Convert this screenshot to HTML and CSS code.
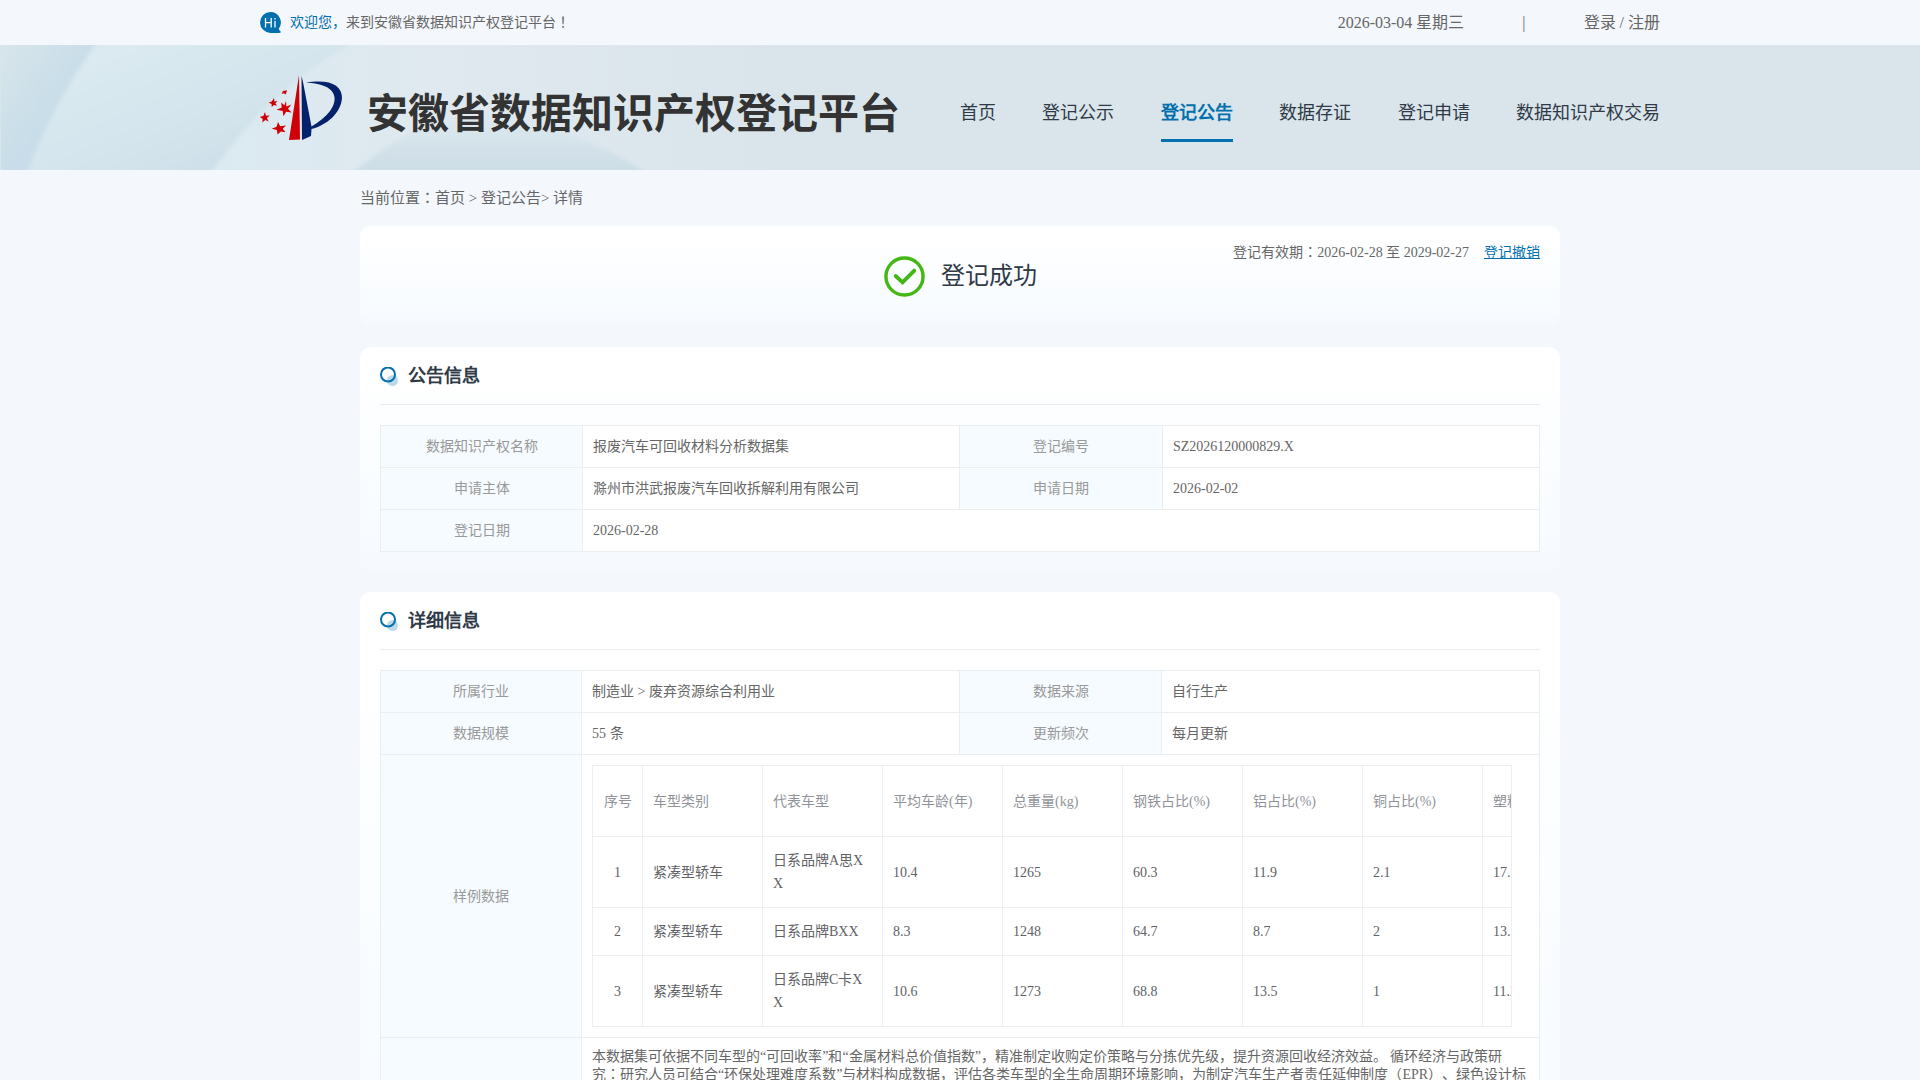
FILE: index.html
```html
<!DOCTYPE html>
<html lang="zh-CN">
<head>
<meta charset="utf-8">
<title>安徽省数据知识产权登记平台</title>
<link rel="stylesheet" href="styles.css">
</head>
<body>
<div class="topbar">
  <div class="wide topbar-inner">
    <div class="welcome">
      <svg class="hi" viewBox="0 0 21 21" aria-hidden="true"><path d="M10.500 0a10.300 10.300 0 0 1 8.300 16.400q.4 2 2.200 3.600-.5.900-2.500.900H10.500A10.400 10.400 0 0 1 10.500 0z" fill="#0270ad"/><path d="M5.500 6v9.500M11.200 6v9.500M5.500 10.700h5.700M15 9v6.500M15 6v1.400" stroke="#fff" stroke-width="1.300" fill="none"/></svg>
      <span><span class="accent">欢迎您，</span>来到安徽省数据知识产权登记平台<span class="punct" lang="zh-TW">！</span></span>
    </div>
    <div class="account">
      <span>2026-03-04 星期三</span>
      <span>|</span>
      <a href="#">登录 / 注册</a>
    </div>
  </div>
</div>
<header class="banner">
  <svg class="waves" viewBox="0 0 780 125" preserveAspectRatio="xMinYMin slice" aria-hidden="true">
    <defs>
      <linearGradient id="g1" x1="0" y1="0" x2="1" y2="1"><stop offset="0" stop-color="#dae6eb"/><stop offset=".5" stop-color="#c9dee9"/><stop offset="1" stop-color="#c3dae7"/></linearGradient>
      <linearGradient id="g2" x1="0" y1="0" x2="1" y2="1"><stop offset=".1" stop-color="#dcebf2"/><stop offset=".5" stop-color="#d5e5ed"/><stop offset="1" stop-color="#c6dae6"/></linearGradient>
      <linearGradient id="g3" x1="0" y1="0" x2="1" y2="0"><stop offset=".25" stop-color="#dbeaf1"/><stop offset=".55" stop-color="#dfe9ef"/><stop offset="1" stop-color="#dae5eb"/></linearGradient>
      <linearGradient id="g4" x1="0" y1="0" x2="0" y2="1"><stop offset="0" stop-color="#dce8ee"/><stop offset=".5" stop-color="#d2e1e9"/><stop offset="1" stop-color="#cbdde6"/></linearGradient>
      <filter id="soft" x="-5%" y="-5%" width="110%" height="110%"><feGaussianBlur stdDeviation="2"/></filter>
    </defs>
    <rect width="780" height="125" fill="url(#g3)"/>
    <g filter="url(#soft)">
      <path d="M-9-9H101Q51 58 24 134H-9z" fill="url(#g1)"/>
      <path d="M101-9H362Q262 48 206 134H24Q51 58 101-9z" fill="url(#g2)"/>
      <path d="M345 134Q395 88 440 78Q550 62 655 134z" fill="url(#g4)"/>
    </g>
  </svg>
  <div class="wide banner-inner">
    <a class="brand" href="#">
      <svg class="mark" viewBox="0 0 84 66" aria-hidden="true">
        <path d="M39 0l1 64.500-11 .5z" fill="#d00007"/>
        <path d="M41.500 1L43 7 51.500 51.500Q64 44 70 36C79 24 77 9 46 7.500 70 4 82 10 82 23 81 38 67 50 51.500 54L51 61 42 65z" fill="#04216b"/>
        <g fill="#d00007">
          <path d="M26 26l.4 5.400 5-2-3.400 4.400 3.600 3.700-5.400-.8-2.800 4.500-.7-5.200-6.200-1.200 5.300-2.400-.7-4.900 3.300 2.700z"/>
          <path d="M14 23l.4 3.500 3.200-.4-2.200 2.200 1.600 2.500-3-.8-2.300 2-.1-3.100-3-1.500 3.200-1z"/>
          <path d="M5 37l.9 3.700 4-.2-3 2.500 1.700 3.500-3.300-1.400-3 2.500.4-3.700-3-2.200 3.600-.6z"/>
          <path d="M18 47l2.200 4.300 5.800-.9-3.300 3.300 2.800 3.500-4.600-.8-3.300 3-.7-4.300-5.200-1.300 4.900-2z"/>
          <path d="M23 16l4-.7-1.200 4.200-1.800-1.200-2.300.7z"/>
        </g>
      </svg>
      <span class="brand-name">安徽省数据知识产权登记平台</span>
    </a>
    <nav class="nav">
      <a href="#">首页</a>
      <a href="#">登记公示</a>
      <a href="#" class="active">登记公告</a>
      <a href="#">数据存证</a>
      <a href="#">登记申请</a>
      <a href="#">数据知识产权交易</a>
    </nav>
  </div>
</header>
<main class="content">
  <div class="crumbs">当前位置<span class="punct" lang="zh-TW">：</span><a href="#">首页</a> &gt; <a href="#">登记公告</a>&gt; 详情</div>
  <section class="card result">
    <div class="validity"><span>登记有效期<span class="punct" lang="zh-TW">：</span>2026-02-28 至 2029-02-27</span><a href="#">登记撤销</a></div>
    <svg class="check" viewBox="0 0 42 42" fill="none" stroke="#44b616" aria-hidden="true"><circle cx="21" cy="21" r="19" stroke-width="3.500"/><path d="M12 20.500l7 6.500 12-12" stroke-width="4" stroke-linecap="round"/></svg>
    <span class="status">登记成功</span>
  </section>
  <section class="card">
    <h2 class="heading"><svg class="dot" viewBox="0 0 18 20" aria-hidden="true"><circle cx="12.500" cy="13.500" r="5.500" fill="#bcd9ea"/><circle cx="8" cy="7.500" r="7" fill="none" stroke="#0270ad" stroke-width="2"/></svg>公告信息</h2>
    <table class="info">
      <colgroup><col class="label"><col class="value"><col class="label-mid"><col></colgroup>
      <tr><th>数据知识产权名称</th><td>报废汽车可回收材料分析数据集</td><th>登记编号</th><td>SZ2026120000829.X</td></tr>
      <tr><th>申请主体</th><td>滁州市洪武报废汽车回收拆解利用有限公司</td><th>申请日期</th><td>2026-02-02</td></tr>
      <tr><th>登记日期</th><td colspan="3">2026-02-28</td></tr>
    </table>
  </section>
  <section class="card">
    <h2 class="heading"><svg class="dot" viewBox="0 0 18 20" aria-hidden="true"><circle cx="12.500" cy="13.500" r="5.500" fill="#bcd9ea"/><circle cx="8" cy="7.500" r="7" fill="none" stroke="#0270ad" stroke-width="2"/></svg>详细信息</h2>
    <table class="info detail">
      <colgroup><col class="label"><col class="value"><col class="label-mid"><col></colgroup>
      <tr><th>所属行业</th><td>制造业 &gt; 废弃资源综合利用业</td><th>数据来源</th><td>自行生产</td></tr>
      <tr><th>数据规模</th><td>55 条</td><th>更新频次</th><td>每月更新</td></tr>
      <tr><th>样例数据</th><td colspan="3">
        <div class="sample-wrap">
          <table class="sample">
            <colgroup><col class="index"><col><col><col><col><col><col><col><col></colgroup>
            <thead><tr><th>序号</th><th>车型类别</th><th>代表车型</th><th>平均车龄(年)</th><th>总重量(kg)</th><th>钢铁占比(%)</th><th>铝占比(%)</th><th>铜占比(%)</th><th>塑料占比(%)</th></tr></thead>
            <tbody>
              <tr><td>1</td><td>紧凑型轿车</td><td>日系品牌A思XX</td><td>10.4</td><td>1265</td><td>60.3</td><td>11.9</td><td>2.1</td><td>17.2</td></tr>
              <tr><td>2</td><td>紧凑型轿车</td><td>日系品牌BXX</td><td>8.3</td><td>1248</td><td>64.7</td><td>8.7</td><td>2</td><td>13.5</td></tr>
              <tr><td>3</td><td>紧凑型轿车</td><td>日系品牌C卡XX</td><td>10.6</td><td>1273</td><td>68.8</td><td>13.5</td><td>1</td><td>11.2</td></tr>
            </tbody>
          </table>
        </div>
      </td></tr>
      <tr class="scenario"><th>应用场景</th><td colspan="3">本数据集可依据不同车型的“可回收率”和“金属材料总价值指数”，精准制定收购定价策略与分拣优先级，提升资源回收经济效益。 循环经济与政策研究<span class="punct" lang="zh-TW">：</span>研究人员可结合“环保处理难度系数”与材料构成数据，评估各类车型的全生命周期环境影响，为制定汽车生产者责任延伸制度（EPR）、绿色设计标准提供依据。</td></tr>
    </table>
  </section>
</main>
</body>
</html>
```
FILE: styles.css
```css
* { box-sizing: border-box; }
body {
  margin: 0;
  background: #f4f7fc;
  color: #666;
  font-family: "Liberation Serif", serif;
  font-size: 14px;
  text-spacing-trim: space-all;
}
a { color: inherit; text-decoration: none; }
.wide { max-width: 1400px; margin: 0 auto; display: flex; align-items: center; justify-content: space-between; }
/* full-width punctuation centred in its cell */
.punct { font-family: "Noto Sans CJK TC", sans-serif; line-height: 1; }

.topbar-inner { height: 45px; }
.welcome { display: flex; align-items: center; gap: 9px; line-height: 18px; }
.hi { width: 21px; height: 21px; }
.accent { color: #0270ad; }
.account { display: flex; align-items: baseline; gap: 58px; font-size: 16px; line-height: 20px; }

.banner { position: relative; overflow: hidden; background: #dae5eb; }
.waves { position: absolute; left: 1px; top: 0; width: 780px; height: 125px; }
.banner-inner { position: relative; height: 125px; }
.brand { display: flex; align-items: center; gap: 23px; color: #333; }
.mark { width: 84px; height: 66px; }
.brand-name { font-family: "Noto Sans CJK SC", sans-serif; font-weight: 700; font-size: 41px; line-height: 60px; margin-top: 4px; white-space: nowrap; }
.nav { display: flex; justify-content: space-between; width: 700px; padding-top: 10px; font-size: 18px; color: #303a47; }
.nav a { padding-top: 4px; line-height: 52px; border-bottom: 3px solid transparent; }
.nav .active { color: #0270ad; font-weight: 700; border-color: #0270ad; }

.content { max-width: 1200px; margin: 0 auto; padding-bottom: 20px; }
.crumbs { font-size: 15px; line-height: 56px; }
.card { border-radius: 10px; padding: 20px; margin-bottom: 20px; background: linear-gradient(#fff, #fff 10%, #f7fbff 90%, #f5f8fd); }
.result { position: relative; display: flex; align-items: flex-start; justify-content: center; gap: 16px; height: 101px; padding-top: 30px; }
.validity { position: absolute; top: 17px; right: 20px; display: flex; gap: 15px; line-height: 20px; }
.validity a { color: #0270ad; text-decoration: underline; }
.check { width: 41px; height: 41px; }
.status { font-size: 24px; line-height: 40px; color: #303a47; }
.heading { display: flex; align-items: flex-start; gap: 10px; margin: 0 0 20px; height: 38px; border-bottom: 1px solid #ebeef0; font-size: 18px; line-height: 18px; color: #303a47; }
.dot { width: 18px; height: 20px; }

table { border-collapse: collapse; table-layout: fixed; width: 100%; }
.info th, .info td { border: 1px solid #ebeef0; padding: 10px; line-height: 21px; }
.info th { color: #999; font-weight: 400; text-align: center; background: #f6fbff; }
.info td { background: #fff; text-align: left; }
.label { width: 202px; }
.label-mid { width: 203px; }
.value { width: 377px; }
.detail .label { width: 201px; }
.detail .label-mid { width: 202px; }
.detail .value { width: 378px; }
.info .scenario td { height: 120px; line-height: 18px; vertical-align: top; }
.sample-wrap { overflow: hidden; max-width: 920px; border-right: 1px solid #ebeef5; }
.info .sample { width: 1011px; }
.index { width: 50px; }
.info .sample th, .info .sample td { height: auto; border-color: #ebeef5; padding: 12px 10px; line-height: 23px; word-break: break-all; vertical-align: middle; }
.info .sample th { color: #909399; text-align: left; background: #fff; height: 71px; }
.info .sample td { color: #606266; }
.info .sample tr > :first-child { text-align: center; }
```
